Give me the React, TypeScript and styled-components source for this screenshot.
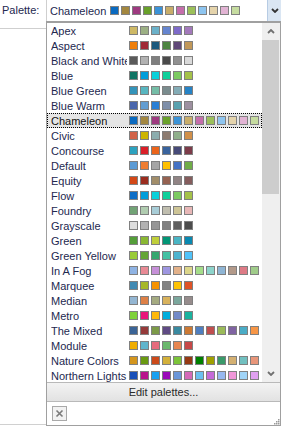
import React from 'react';
import styled, { createGlobalStyle } from 'styled-components';

type Palette = {
    name: string;
    colors: string[];
};

const palettes: Palette[] = [
    { name: 'Apex', colors: ['#ceb966', '#9cb084', '#6bb1c9', '#6585cf', '#7e6bc9', '#a379bb'] },
    { name: 'Aspect', colors: ['#f07f09', '#9f2936', '#1b587c', '#4e8542', '#604878', '#c19859'] },
    { name: 'Black and White', colors: ['#5a5a5a', '#b2b2b2', '#7f7f7f', '#4a4a4a', '#919191', '#dadada'] },
    { name: 'Blue', colors: ['#117565', '#009dd9', '#0bd0d9', '#10cf9b', '#7cca62', '#a5c249'] },
    { name: 'Blue Green', colors: ['#3494ba', '#58b6c0', '#75bda7', '#7a8c8e', '#84acb6', '#2683c6'] },
    { name: 'Blue Warm', colors: ['#4a66ac', '#629dd1', '#297fd5', '#7f8fa9', '#5aa2ae', '#9d90a0'] },
    {
        name: 'Chameleon',
        colors: ['#0a6ac0', '#a3873f', '#9e3a80', '#69a12a', '#3b93d8', '#c8ad6a', '#c56eab', '#9cc05a', '#8ec5f0', '#e5d4ac', '#e2b4d4', '#c6dca0'],
    },
    { name: 'Civic', colors: ['#d16349', '#ccb400', '#8cadae', '#8c7b70', '#8fb08c', '#d19049'] },
    { name: 'Concourse', colors: ['#2da2bf', '#da1f28', '#eb641b', '#39639d', '#474b78', '#7d3c4a'] },
    { name: 'Default', colors: ['#5b9bd5', '#ed7d31', '#a5a5a5', '#ffc000', '#4472c4', '#70ad47'] },
    { name: 'Equity', colors: ['#d34817', '#9b2d1f', '#a28e6a', '#956251', '#918485', '#855d5d'] },
    { name: 'Flow', colors: ['#0f6fc6', '#009dd9', '#0bd0d9', '#10cf9b', '#7cca62', '#a5c249'] },
    { name: 'Foundry', colors: ['#72a376', '#b0ccb0', '#a8cdd7', '#c0beaf', '#cec597', '#e8b7b7'] },
    { name: 'Grayscale', colors: ['#dddddd', '#b2b2b2', '#969696', '#808080', '#5f5f5f', '#4d4d4d'] },
    { name: 'Green', colors: ['#549e39', '#8ab833', '#c0cf3a', '#029676', '#4ab5c4', '#0989b1'] },
    { name: 'Green Yellow', colors: ['#99cb38', '#63a537', '#37a76f', '#44c1a3', '#4eb3cf', '#51c3f9'] },
    {
        name: 'In A Fog',
        colors: ['#8fb3e3', '#e88a95', '#c690d8', '#9e96e0', '#e3b28a', '#dcd68a', '#a5dd8a', '#8dd4cb', '#8fb5d4', '#b39a8a', '#dd7b86', '#a0cc8a'],
    },
    { name: 'Marquee', colors: ['#418ab3', '#a6b727', '#f69200', '#838383', '#fec306', '#df5327'] },
    { name: 'Median', colors: ['#94b6d2', '#dd8047', '#a5ab81', '#d8b25c', '#7ba79d', '#968c8c'] },
    { name: 'Metro', colors: ['#7fd13b', '#ea157a', '#feb80a', '#00addc', '#738ac8', '#1ab39f'] },
    {
        name: 'The Mixed',
        colors: ['#3b6496', '#953a3a', '#7c9a48', '#5f4b84', '#3a8aa0', '#cc7a35', '#4f7fc0', '#c04f4f', '#9bbb59', '#8064a2', '#4bacc6', '#f79646'],
    },
    { name: 'Module', colors: ['#f0ad00', '#60b5cc', '#e66c7d', '#6bb76d', '#e88651', '#c64847'] },
    {
        name: 'Nature Colors',
        colors: ['#d4961e', '#6a9a12', '#cc4a1a', '#d3b03a', '#7cc43a', '#963a14', '#008000', '#a0a000', '#3a9a6a', '#d4b072', '#72c0c0', '#e8967a'],
    },
    {
        name: 'Northern Lights',
        colors: ['#1a50b8', '#b8148c', '#1aa0f0', '#9a0ab8', '#6a96d8', '#d46ab8', '#6ac0f0', '#c46ad8', '#96b8f0', '#f096d8', '#a0d4f8', '#e0a0f0'],
    },
];

const selectedName = 'Chameleon';

const GlobalStyle = createGlobalStyle`
  html, body {
    margin: 0;
    padding: 0;
    background: #ffffff;
  }
`;

const Frame = styled.div`
  position: relative;
  width: 281px;
  height: 426px;
  overflow: hidden;
  background: #ffffff;
  font-family: 'Liberation Sans', Arial, sans-serif;
  font-size: 11px;
  color: #23284f;
`;

const Grid = styled.div`
  display: grid;
  grid-template-columns: 47px 1fr;
  grid-template-rows: 29px 1fr;
  height: 425px;
  border-bottom: 1px solid #d0d0d0;
  box-sizing: border-box;
`;

const LabelCell = styled.div<{ $top?: boolean }>`
  box-sizing: border-box;
  border-right: 1px solid #cfcfcf;
  border-bottom: ${(p) => (p.$top ? '1px solid #cfcfcf' : 'none')};
  padding-left: 2px;
  line-height: 21px;
`;

const EditorCell = styled.div`
  height: 21px;
`;

const Combo = styled.div`
  display: flex;
  align-items: center;
  height: 21px;
  background: #ffffff;
`;

const ComboText = styled.div`
  width: 60px;
  padding-left: 3px;
  flex: none;
`;

const Swatches = styled.div`
  display: flex;
  gap: 2px;
  flex: 1;
`;

const Swatch = styled.div<{ $color: string }>`
  width: 9px;
  height: 9px;
  box-sizing: border-box;
  border: 1px solid #808080;
  background: ${(p) => p.$color};
  flex: none;
`;

const DropButton = styled.div`
  width: 14px;
  height: 21px;
  display: flex;
  align-items: center;
  justify-content: center;
  background: #dae6f3;
  border-left: 1px solid #b7cce4;
  box-sizing: border-box;
`;

const Popup = styled.div`
  position: absolute;
  left: 46px;
  top: 21px;
  right: 0;
  bottom: 0;
  display: flex;
  flex-direction: column;
  box-sizing: border-box;
  border: 1px solid #a0a0a0;
  border-top-width: 2px;
  background: #ffffff;
`;

const ListArea = styled.div`
  flex: 1;
  min-height: 0;
  display: flex;
`;

const Items = styled.div`
  flex: 1;
  overflow: hidden;
`;

const Row = styled.div<{ $selected?: boolean }>`
  display: flex;
  align-items: center;
  height: 15px;
  box-sizing: border-box;
  padding-left: 4px;
  background: ${(p) => (p.$selected ? '#e5e5e5' : 'transparent')};
  outline: ${(p) => (p.$selected ? '1px dotted #000' : 'none')};
  outline-offset: -1px;
  color: ${(p) => (p.$selected ? '#111' : 'inherit')};
`;

const RowName = styled.div`
  width: 76px;
  margin-right: 2px;
  flex: none;
  white-space: nowrap;
  overflow: hidden;
`;

const ScrollBar = styled.div`
  width: 18px;
  flex: none;
  display: flex;
  flex-direction: column;
  background: #efefef;
`;

const ScrollButton = styled.div<{ $h: number }>`
  height: ${(p) => p.$h}px;
  display: flex;
  align-items: center;
  justify-content: center;
  flex: none;
`;

const Thumb = styled.div`
  height: 154px;
  margin: 0 1px 0 0;
  background: #cdcdcd;
  flex: none;
`;

const Track = styled.div`
  flex: 1;
`;

const EditButton = styled.div`
  height: 20px;
  flex: none;
  box-sizing: border-box;
  border-top: 1px solid #b9b9b9;
  border-bottom: 1px solid #b9b9b9;
  background: linear-gradient(#f3f3f3, #e2e2e2);
  display: flex;
  align-items: center;
  justify-content: center;
  color: #2a2a2a;
`;

const Footer = styled.div`
  height: 23px;
  flex: none;
  display: flex;
  align-items: flex-end;
  justify-content: space-between;
  padding: 0 0 0 5px;
`;

const ClearButton = styled.div`
  width: 15px;
  height: 15px;
  margin-bottom: 4px;
  box-sizing: border-box;
  border: 1px solid #a9a9a9;
  background: #f2f2f2;
  display: flex;
  align-items: center;
  justify-content: center;
`;

const Chevron = ({ up, color }: { up?: boolean; color: string }) => (
    <svg width="8" height="5" viewBox="0 0 8 5">
        <path
            d={up ? 'M1 4 L4 1 L7 4' : 'M1 1 L4 4 L7 1'}
            fill="none"
            stroke={color}
            strokeWidth="1.8"
        />
    </svg>
);

const Grip = () => (
    <svg width="7" height="7" viewBox="0 0 7 7">
        {[
            [5, 1],
            [3, 3],
            [5, 3],
            [1, 5],
            [3, 5],
            [5, 5],
        ].map(([x, y]) => (
            <rect key={`${x}-${y}`} x={x} y={y} width="1.5" height="1.5" fill="#9a9a9a" />
        ))}
    </svg>
);

const App: React.FC = () => {
    const selected = palettes.find((p) => p.name === selectedName)!;

    return (
        <Frame>
            <GlobalStyle />
            <Grid>
                <LabelCell $top>Palette:</LabelCell>
                <EditorCell>
                    <Combo>
                        <ComboText>{selected.name}</ComboText>
                        <Swatches>
                            {selected.colors.map((c, i) => (
                                <Swatch key={i} $color={c} />
                            ))}
                        </Swatches>
                        <DropButton>
                            <Chevron color="#333" />
                        </DropButton>
                    </Combo>
                </EditorCell>
                <LabelCell />
                <div />
            </Grid>

            <Popup>
                <ListArea>
                    <Items>
                        {palettes.map((p) => (
                            <Row key={p.name} $selected={p.name === selectedName}>
                                <RowName>{p.name}</RowName>
                                <Swatches>
                                    {p.colors.map((c, i) => (
                                        <Swatch key={i} $color={c} />
                                    ))}
                                </Swatches>
                            </Row>
                        ))}
                    </Items>
                    <ScrollBar>
                        <ScrollButton $h={17}>
                            <Chevron up color="#707070" />
                        </ScrollButton>
                        <Thumb />
                        <Track />
                        <ScrollButton $h={18}>
                            <Chevron color="#707070" />
                        </ScrollButton>
                    </ScrollBar>
                </ListArea>
                <EditButton>Edit palettes...</EditButton>
                <Footer>
                    <ClearButton>
                        <svg width="9" height="9" viewBox="0 0 9 9">
                            <path d="M1.5 1.5 L7.5 7.5 M7.5 1.5 L1.5 7.5" stroke="#7a7a7a" strokeWidth="1.6" />
                        </svg>
                    </ClearButton>
                    <Grip />
                </Footer>
            </Popup>
        </Frame>
    );
};

export default App;
